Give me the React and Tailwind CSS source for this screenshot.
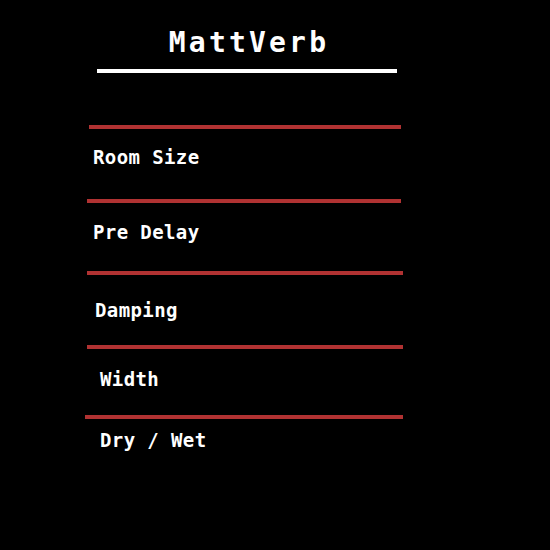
const rows = [
  { label: "Room Size", line: "mt-[52px] ml-[89px] w-[312px]", text: "mt-[19px] ml-[93px]" },
  { label: "Pre Delay", line: "mt-[32px] ml-[87px] w-[314px]", text: "mt-[20px] ml-[93px]" },
  { label: "Damping", line: "mt-[29px] ml-[87px] w-[316px]", text: "mt-[26px] ml-[95px]" },
  { label: "Width", line: "mt-[25px] ml-[87px] w-[316px]", text: "mt-[21px] ml-[100px]" },
  { label: "Dry / Wet", line: "mt-[26px] ml-[85px] w-[318px]", text: "mt-[12px] ml-[100px]" },
];

export default function App() {
  return (
    <div
      className="w-[550px] h-[550px] bg-black text-white overflow-hidden"
      style={{ fontFamily: '"DejaVu Sans Mono", "Liberation Mono", monospace' }}
    >
      <div className="w-[300px] ml-[97px] pt-[29px]">
        <h1 className="h-[28px] pl-[4px] text-[28px] leading-[28px] font-bold tracking-[3.2px] text-center">
          MattVerb
        </h1>
        <div className="mt-[12px] h-[4px] bg-white" />
      </div>

      {rows.map((r) => (
        <div key={r.label}>
          <div className={`h-[4px] bg-[#b03232] ${r.line}`} />
          <div className={`h-[19px] text-[19px] leading-[19px] font-bold tracking-[0.4px] ${r.text}`}>
            {r.label}
          </div>
        </div>
      ))}
    </div>
  );
}
